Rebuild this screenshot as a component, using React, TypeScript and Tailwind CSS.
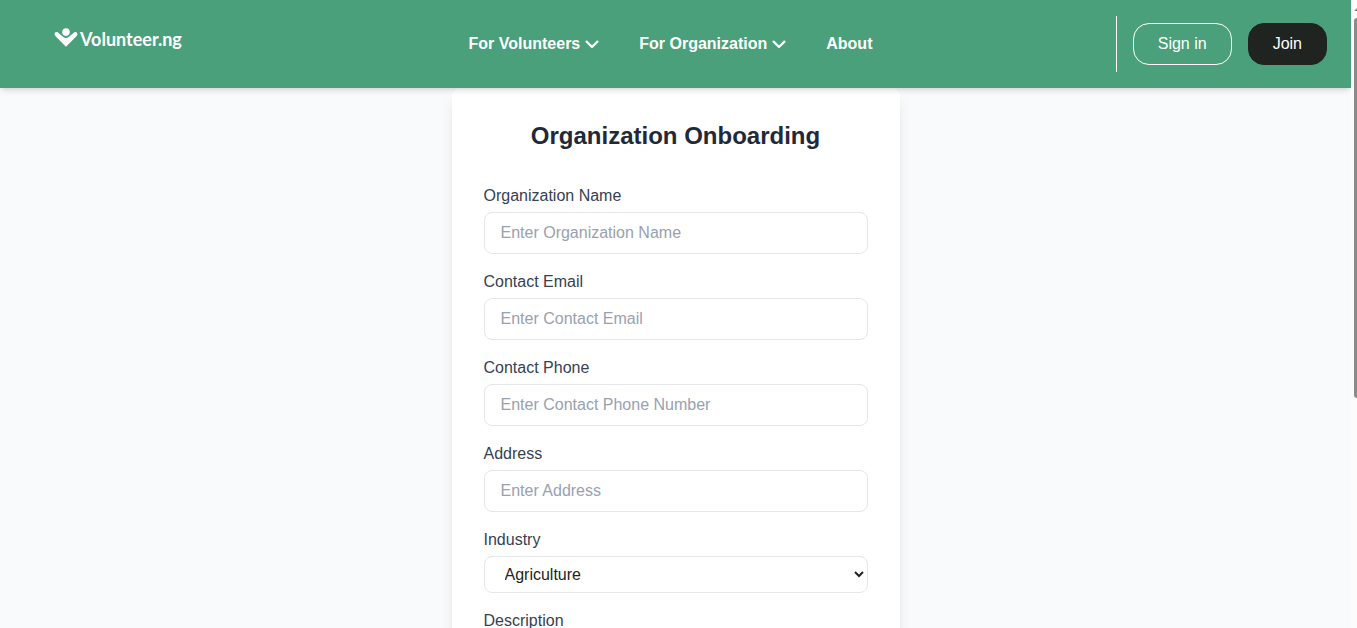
import React from "react";

function LogoMark() {
  return (
    <svg viewBox="0 0 24 20" className="h-5 w-6 shrink-0" fill="none" aria-hidden="true">
      <circle cx="12" cy="4.1" r="3.8" fill="#fff" />
      <path
        d="M0.6 6.2C0.4 4.4 2.4 3.4 3.9 4.5L9 8.8Q12 11.4 15 8.8L20.1 4.5C21.6 3.4 23.6 4.4 23.4 6.2C23.3 7.2 22.8 7.8 22.2 8.4L12 18.8L1.8 8.4C1.2 7.8 0.7 7.2 0.6 6.2Z"
        fill="#fff"
      />
    </svg>
  );
}

function Chevron() {
  return (
    <svg viewBox="0 0 14 10" className="h-2.5 w-3.5" fill="none" aria-hidden="true">
      <path d="M1.6 2.6L7 8L12.4 2.6" stroke="#fff" strokeWidth="2.2" strokeLinecap="round" strokeLinejoin="round" />
    </svg>
  );
}

function NavMenu({ label }: { label: string }) {
  return (
    <button type="button" className="flex items-center gap-[5px] font-bold">
      {label}
      <Chevron />
    </button>
  );
}

function Header() {
  return (
    <header className="relative z-10 flex h-22 shrink-0 items-center justify-between bg-[#4aa07a] pr-6 pl-3.5 text-white shadow-md">
      <div className="flex flex-1 pb-3">
        <a href="#" className="flex items-center pl-10 font-['Century_Gothic','Lato',sans-serif] text-lg leading-5 font-bold">
          <LogoMark />
          <span className="pt-0.5 pl-0.5">Volunteer.ng</span>
        </a>
      </div>
      <nav className="flex items-center gap-10">
        <NavMenu label="For Volunteers" />
        <NavMenu label="For Organization" />
        <a href="#about" className="font-bold">About</a>
      </nav>
      <div className="flex flex-1 justify-end">
        <div className="flex h-14 items-center gap-4 border-l border-white pl-4">
          <button type="button" className="h-[42px] rounded-2xl border border-white px-6">Sign in</button>
          <button type="button" className="h-[42px] rounded-2xl border border-[#1f2421] bg-[#1f2421] px-6">Join</button>
        </div>
      </div>
    </header>
  );
}

const fieldClass = "w-full rounded-lg border border-gray-200 bg-white";

function TextField({ id, label, placeholder, type = "text" }: { id: string; label: string; placeholder: string; type?: string }) {
  return (
    <div className="flex flex-col gap-1">
      <label htmlFor={id} className="text-gray-700">{label}</label>
      <input id={id} type={type} placeholder={placeholder} className={`${fieldClass} px-4 py-2 placeholder:text-gray-400`} />
    </div>
  );
}

function OnboardingForm() {
  return (
    <form className="w-full max-w-md self-start rounded-lg bg-white p-8 shadow-lg">
      <h1 className="mb-8 text-center text-2xl font-bold text-gray-800">Organization Onboarding</h1>
      <div className="flex flex-col gap-4">
        <TextField id="name" label="Organization Name" placeholder="Enter Organization Name" />
        <TextField id="email" label="Contact Email" placeholder="Enter Contact Email" type="email" />
        <TextField id="phone" label="Contact Phone" placeholder="Enter Contact Phone Number" type="tel" />
        <TextField id="address" label="Address" placeholder="Enter Address" />
        <div className="flex flex-col gap-1">
          <label htmlFor="industry" className="text-gray-700">Industry</label>
          <select id="industry" className={`${fieldClass} h-[37px] px-4 text-[#1f2421]`}>
            <option>Agriculture</option>
            <option>Education</option>
            <option>Health</option>
            <option>Technology</option>
          </select>
        </div>
        <div className="flex flex-col gap-1">
          <label htmlFor="description" className="text-gray-700">Description</label>
          <textarea id="description" rows={4} placeholder="Enter Description" className={`${fieldClass} px-4 py-2 placeholder:text-gray-400`} />
        </div>
      </div>
    </form>
  );
}

export default function App() {
  return (
    <div className="flex h-screen overflow-hidden bg-[#fcfcfc] font-['Liberation_Sans',Arial,sans-serif] text-base">
      <div className="flex min-w-0 flex-1 flex-col overflow-hidden bg-gray-50">
        <Header />
        <main className="flex min-h-0 flex-1 justify-center">
          <OnboardingForm />
        </main>
      </div>
      <div className="flex w-1.5 shrink-0 flex-col items-end overflow-hidden" aria-hidden="true">
        <svg viewBox="0 0 3 18" className="h-[18px] w-[3px]">
          <path d="M0 11L3 8V11Z" fill="#8b8b8b" />
        </svg>
        <div className="h-[380px] w-[3px] rounded-l-sm bg-[#8b8b8b]" />
      </div>
    </div>
  );
}
